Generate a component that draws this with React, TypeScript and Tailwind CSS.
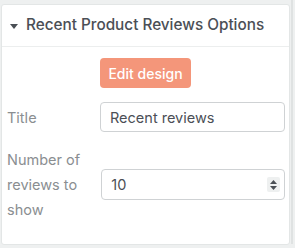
import React from 'react';

const font = { fontFamily: 'Inter, "Open Sans", sans-serif' };

export default function App() {
  return (
    <div className="w-[295px] h-[248px] bg-[#eef0f0] pt-[4px] pl-[1px] flex" style={font}>
      <div className="w-[289px] h-[241px] bg-white border border-[#e3e6e6] rounded-[3px] flex flex-col">
        <div className="h-[42px] flex items-center gap-[8px] pl-[8px] border-b border-[#eceeee]">
          <svg width="8" height="5" viewBox="0 0 8 5" className="mt-[1px]">
            <path d="M0 0h8L4 5z" fill="#4a4f55" />
          </svg>
          <span className="text-[15.3px] font-medium text-[#4b4f56]">
            Recent Product Reviews Options
          </span>
        </div>
        <div className="flex justify-center pt-[11px]">
          <button
            type="button"
            className="w-[91px] h-[30px] rounded-[4px] bg-[#f4967a] text-white text-[14px] font-medium"
          >
            Edit design
          </button>
        </div>
        <div className="flex items-center mt-[14px] pl-[5px] pr-[4px]">
          <label className="w-[95px] text-[14.5px] text-[#8a8e91] pt-[2px]">Title</label>
          <input
            readOnly
            value="Recent reviews"
            className="w-[185px] h-[30px] rounded-[4px] border border-[#cfd2d4] px-[9px] text-[14.5px] text-[#4b4f56] outline-none"
          />
        </div>
        <div className="flex items-center mt-[15px] pl-[5px] pr-[4px]">
          <label className="w-[95px] text-[14.5px] leading-[25px] text-[#8a8e91]">
            Number of
            <br />
            reviews to
            <br />
            show
          </label>
          <div className="relative w-[185px] h-[31px] rounded-[4px] border border-[#cfd2d4] flex items-center">
            <span className="pl-[9px] text-[14.5px] text-[#4b4f56]">10</span>
            <div className="absolute right-[4px] top-[7px] w-[13px] h-[15px] bg-[#eef0f0] rounded-[2px] flex flex-col items-center justify-center gap-[2px]">
              <svg width="7" height="4" viewBox="0 0 7 4">
                <path d="M0 4L3.5 0L7 4z" fill="#4a4f55" />
              </svg>
              <svg width="7" height="4" viewBox="0 0 7 4">
                <path d="M0 0h7L3.5 4z" fill="#4a4f55" />
              </svg>
            </div>
          </div>
        </div>
      </div>
      <div className="w-[2px] h-full bg-[#dfe2e2] ml-[1px] -mt-[4px]" />
    </div>
  );
}
